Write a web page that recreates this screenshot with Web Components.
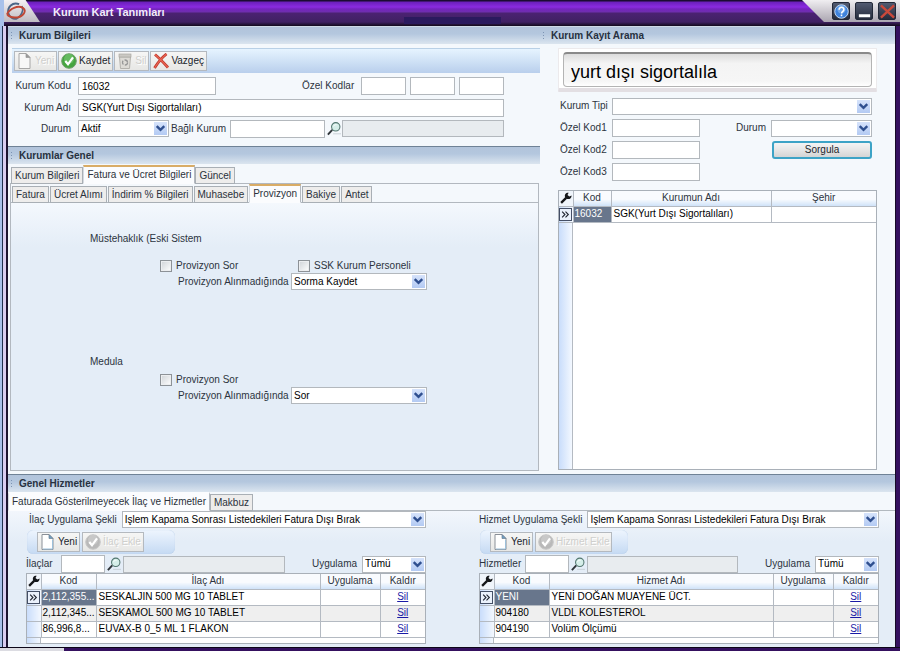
<!DOCTYPE html>
<html lang="tr">
<head>
<meta charset="utf-8">
<meta name="viewport" content="width=device-width, initial-scale=1">
<title>Kurum Kart Tanımları</title>
<style>
  body { margin: 0; font: 10px/12px "Liberation Sans", Arial, sans-serif; color: #2c3440; }
</style>
</head>
<body>
<kk-app></kk-app>
<script>
const BASE = `
  *, *::before, *::after { box-sizing: border-box; }
  :host([hidden]) { display: none; }
  input, select, button { font: inherit; color: #000; margin: 0; border-radius: 0; }
`;

class Base extends HTMLElement {
  connectedCallback() {
    if (this.shadowRoot) return;
    const root = this.attachShadow({ mode: 'open' });
    root.innerHTML = `<style>${BASE}${this.css()}</style>${this.html()}`;
  }
  a(name, fallback = '') { return this.getAttribute(name) ?? fallback; }
  css() { return ''; }
  html() { return '<slot></slot>'; }
}

const ICONS = {
  page: `<path d="M2 .5h7l4 4v11H2z" fill="#fff" stroke="#8a9098"/><path d="M9 .5l4 4H9z" fill="#6c9fc4" stroke="#6d7f90" stroke-width=".7"/><path d="M3 15h9.500V6" fill="none" stroke="#9cc0da"/>`,
  pageoff: `<path d="M2 .5h7l4 4v11H2z" fill="#f7f7f7" stroke="#a6a6a6"/><path d="M9 .5l4 4H9z" fill="#999" stroke="#999" stroke-width=".7"/>`,
  check: `<circle cx="8" cy="8" r="7.300" fill="#45a53f" stroke="#6f9f6b"/><circle cx="8" cy="6" r="5" fill="#7cc974" opacity=".6"/><path d="M4.300 8l2.700 3.300 5-7" fill="none" stroke="#fff" stroke-width="2.200"/>`,
  checkoff: `<circle cx="8" cy="8" r="7.300" fill="#b9b9b9" stroke="#c8c8c8"/><circle cx="8" cy="6" r="5" fill="#d2d2d2" opacity=".6"/><path d="M4.300 8l2.700 3.300 5-7" fill="none" stroke="#fff" stroke-width="2.200"/>`,
  bin: `<path d="M2.500 4h11L12.500 15.500h-9z" fill="#dddbd6" stroke="#b3b1ac"/><rect x="2" y="1" width="12" height="3" fill="#cbc9c4" stroke="#aaa8a3" stroke-width=".7"/><circle cx="8" cy="9.500" r="2.500" fill="none" stroke="#969696" stroke-width="1.300" stroke-dasharray="4 1.500"/>`,
  cross: `<path d="M2 1.500C5 4 10 9 15 14.500M13.500 1C9 4.500 5 9.500 1.500 15" fill="none" stroke="#bd3528" stroke-width="2.800"/><path d="M2 1.500C5 4 10 9 15 14.500M13.500 1C9 4.500 5 9.500 1.500 15" fill="none" stroke="#ea6553" stroke-width="1.200"/>`,
  lens: `<path d="M1 14.500l5-5.500" stroke="#30353a" stroke-width="2.200"/><circle cx="10" cy="5.500" r="4.800" fill="#d5eee9" stroke="#52766f" stroke-width="1.200"/><path d="M7.500 5c.5-1.500 2-2.200 3.500-1.800" fill="none" stroke="#fff"/><path d="M7 13.500h9" stroke="#c5cdd2"/>`,
  wrench: `<path d="M1.500 14.500l7-7" stroke="#15171a" stroke-width="3"/><path d="M15.500 4.500l-3 1.500L10 4l1.500-3C8 .5 5.500 3.500 6.800 6.500l2.700 2.700c3 1 6-1 6-4.700z" fill="#15171a"/>`,
  help: `<circle cx="8" cy="8" r="7.200" fill="#3f83dc" stroke="#cfe3fa"/><circle cx="8" cy="5.500" r="4.500" fill="#8fbcf0" opacity=".6"/><path d="M5.500 6c0-3.500 5.200-3.300 5 0 0 1.800-2.400 1.800-2.400 4M8 11.300v1.700" fill="none" stroke="#fff" stroke-width="1.700"/>`,
  min: `<path d="M2 11h12v3H2z" fill="#fff"/>`,
  close: `<path d="M1 1.500l14 13M15 1.500l-14 13" stroke="#c9493b" stroke-width="2.600"/>`,
  chevron: `<path d="M2.500 4.500L8 10l5.500-5.500" fill="none" stroke="#2f4f8f" stroke-width="3.500"/>`,
  arrows: `<path d="M2 3l5 5-5 5M8 3l5 5-5 5" fill="none" stroke="#1f2430" stroke-width="2"/>`,
  logo: `<path d="M10.500 2.500C5 .5 1 5 1.800 9.500c.7 3.500 4 5.500 7 4.500" fill="none" stroke="#4b6687" stroke-width="1.500"/><path d="M8.800 14c3.500-2 5.500-6 4-10" fill="none" stroke="#4b6687" stroke-width="1.300"/><path d="M.8 10.500C3 6 9.500 3.200 13.500 5.500c3.500 2.500 0 6.800-4 7.500C6 13.500 2.500 12.800.8 10.500" fill="none" stroke="#c04735" stroke-width="1.500"/>`
};

customElements.define('kk-icon', class extends Base {
  css() { return `:host{display:block;flex:none;width:16px;height:16px} svg{display:block;width:100%;height:100%}`; }
  html() { return `<svg viewBox="0 0 16 16" aria-hidden="true">${ICONS[this.a('name')]}</svg>`; }
});

customElements.define('kk-button', class extends Base {
  css() { return `
    :host{display:block;flex:none}
    button{display:flex;align-items:center;gap:2px;height:20px;width:100%;padding:0 2px;border:1px solid #b4b9bf;
      background:linear-gradient(#f6f6f5,#e7e7e5);color:#20252c;white-space:nowrap}
    button:disabled{color:#cfcfcd;text-shadow:1px 1px #fff}
    button.plain{justify-content:center;height:18px;border:2px solid #3da3c6;border-radius:3px;padding:0;
      background:linear-gradient(#f4f4f4,#e6e6e6 50%,#d4d4d4)}`; }
  html() {
    const icon = this.a('icon');
    return `<button type="button" class="${icon ? '' : 'plain'}" ${this.hasAttribute('disabled') ? 'disabled' : ''}>
      ${icon ? `<kk-icon name="${icon}"></kk-icon>` : ''}<span><slot></slot></span></button>`;
  }
});

customElements.define('kk-input', class extends Base {
  css() { return `
    :host{display:flex;align-items:center;gap:7px;min-width:0}
    label{flex:none;width:var(--label,auto);text-align:var(--align,left);white-space:nowrap}
    input{flex:1;min-width:0;width:0;height:18px;border:1px solid #b3b8bd;background:#fff;padding:0 3px;outline:0}
    input:disabled{background:#e8ecef;height:17px}`; }
  html() {
    const label = this.a('label');
    return `${label ? `<label for="f">${label}</label>` : ''}<input id="f" type="text" value="${this.a('value')}"
      ${label ? '' : `aria-label="${this.a('hint')}"`} ${this.hasAttribute('disabled') ? 'disabled' : ''}>`;
  }
});

customElements.define('kk-select', class extends Base {
  css() { return `
    :host{display:flex;align-items:center;gap:7px;min-width:0}
    label{flex:none;width:var(--label,auto);text-align:var(--align,left);white-space:nowrap}
    .box{position:relative;flex:1;min-width:0}
    select{display:block;appearance:none;width:100%;height:17px;border:1px solid #b3b8bd;background:#fff;padding:0 18px 0 2px;outline:0}
    .drop{position:absolute;right:2px;top:2px;bottom:2px;width:13px;display:grid;place-items:center;
      background:linear-gradient(#d6e3fb,#b3caf3);pointer-events:none}
    kk-icon{width:11px;height:11px}`; }
  html() {
    return `<label for="f">${this.a('label')}</label><div class="box"><select id="f"><option>${this.a('value')}</option></select>
      <span class="drop"><kk-icon name="chevron"></kk-icon></span></div>`;
  }
});

customElements.define('kk-check', class extends Base {
  css() { return `
    :host{display:block} label{display:flex;align-items:center;gap:4px;white-space:nowrap}
    input{appearance:none;width:12px;height:12px;border:1px solid #8d9297;background:linear-gradient(135deg,#cfd3d7,#fff);
      box-shadow:inset 0 0 0 1px #eceef0}
    input:checked{background:#3a5f9c}`; }
  html() { return `<label><input type="checkbox"><slot></slot></label>`; }
});

customElements.define('kk-section', class extends Base {
  css() { return `
    :host{display:flex;flex-direction:column;min-width:0}
    h2{flex:none;display:flex;align-items:center;gap:5px;margin:0;height:18px;padding:0 2px;font:bold 10px/16px "Liberation Sans",Arial,sans-serif;
      color:#27313f;border-top:1px solid var(--edge,#cfdae6);background:linear-gradient(#b2c4db,#b4c7de 40%,#dbe5ef)}
    h2::before{content:"";width:4px;height:9px;background:radial-gradient(circle,#7d94b3 40%,transparent 45%) 0 0/3px 3px}
    .body{flex:1;display:flex;flex-direction:column;min-height:0}`; }
  html() { return `<h2>${this.a('heading')}</h2><div class="body"><slot></slot></div>`; }
});

customElements.define('kk-tabs', class extends Base {
  css() { return `
    :host{display:flex;flex-direction:column;flex:1;min-height:0}
    .bar{display:flex;align-items:flex-end;gap:var(--gap,0);height:19px;padding-left:var(--indent,0);
      box-shadow:inset 0 -1px #b2b8bf}
    button{flex:none;height:17px;padding:0 3px;border:1px solid #a9afb5;background:#eeedec;color:#2b323b;white-space:nowrap;line-height:15px}
    button[aria-selected=true]{height:19px;border-color:transparent #b4b9c0 transparent #d5dae0;border-top:2px solid var(--accent,#d9ac66);background:#fbfcfe;padding-bottom:2px}
    .body{flex:1;display:flex;flex-direction:column;border:solid #b2b8bf;border-width:var(--frame,0)}`; }
  html() {
    const active = this.a('active');
    return `<div class="bar" role="tablist">${this.a('tabs').split('|').map(t =>
      `<button type="button" role="tab" aria-selected="${t === active}">${t}</button>`).join('')}</div>
      <div class="body" role="tabpanel"><slot></slot></div>`;
  }
});

customElements.define('kk-grid', class extends Base {
  css() { return `
    :host{display:block;border:1px solid #a9b0b8;background:linear-gradient(90deg,#c9ddfb,#f3f8ff 13px,#b4bac2 13px,#b4bac2 14px,#fff 14px)}
    table{width:100%;border-collapse:collapse;table-layout:fixed}
    th,td{height:16px;padding:0 2px;border:1px solid #b4bac2;white-space:nowrap;line-height:12px}
    tr>:first-child{border-left:0;padding:0;width:14px} tr>:last-child{border-right:0}
    th{font-weight:normal;border-top:0;height:15px;background:linear-gradient(#f9fbfe 55%,#cfe2f8)}
    th:first-child{background:#f0f5fb}
    td{background:#fff;color:#000}
    td:nth-child(2){padding:0 0 0 1px}
    td:first-child{background:linear-gradient(90deg,#c9ddfb,#f3f8ff)}
    tr:nth-child(even) td:not(:first-child){background:#efefef}
    tr.on td:nth-child(2){background:#68768c;color:#fff}
    .mark{display:grid;place-items:center;width:13px;height:13px;border:1px solid #444f66;background:#eaf1fc}
    .mark kk-icon{width:9px;height:9px}
    th kk-icon{width:12px;height:12px;margin:0 auto}
    .mid{text-align:center} a{color:#1a1aa6}`; }
  html() {
    const cols = this.a('cols').split('|').map(c => c.split(':'));
    const rows = this.a('rows').split(';').map(r => r.split('|'));
    const cell = (v) => v === 'Sil' ? `<td class="mid"><a href="#">Sil</a></td>` : `<td>${v}</td>`;
    return `<table><colgroup><col style="width:14px">${cols.map(c => `<col${c[1] ? ` style="width:${c[1]}px"` : ''}>`).join('')}</colgroup>
      <thead><tr><th aria-label="Ayarlar"><kk-icon name="wrench"></kk-icon></th>${cols.map(c => `<th scope="col">${c[0]}</th>`).join('')}</tr></thead>
      <tbody>${rows.map((r, i) => `<tr class="${i ? '' : 'on'}"><td>${i ? '' : '<span class="mark"><kk-icon name="arrows"></kk-icon></span>'}</td>${r.map(cell).join('')}</tr>`).join('')}</tbody></table>`;
  }
});

customElements.define('kk-titlebar', class extends Base {
  css() { return `
    :host{display:flex;justify-content:space-between;height:26px;color:#fff;border-left:4px solid #a8c1ea;
      background:linear-gradient(#2b1a5e,#2b1a5e) 50% 17px/97px 7px no-repeat,
        linear-gradient(#1c0b33 0 1px,#6b1fbb 2px,#8a2be0 7px,#7424bd 9px,#6f2fae 12px,#4b2272 13px,#402163 22px,#120a1c 26px)}
    .brand{display:flex;gap:13px}
    .logo{width:36px;height:22px;padding:1px 2px;background:linear-gradient(#f3f0f3,#bfbbc2);clip-path:polygon(0 0,60% 0,100% 100%,0 100%)}
    .logo kk-icon{width:20px;height:20px}
    h1{margin:0;font:bold 11px/25px "Liberation Sans",Arial,sans-serif;color:#f2ecfa}
    .tools{display:flex;gap:5px;height:22px;padding:2px 4px 2px 30px;background:linear-gradient(#f0eef1,#aaa5b0);clip-path:polygon(0 0,100% 0,100% 100%,22px 100%)}
    button{display:grid;place-items:center;width:18px;height:18px;padding:0;border:1px solid #222838;border-radius:2px;background:linear-gradient(#525a70,#262c3c)}
    button kk-icon{width:15px;height:15px}`; }
  html() { return `<div class="brand"><span class="logo"><kk-icon name="logo"></kk-icon></span><h1><slot></slot></h1></div>
    <div class="tools"><button type="button" aria-label="Yardım"><kk-icon name="help"></kk-icon></button>
    <button type="button" aria-label="Küçült"><kk-icon name="min"></kk-icon></button>
    <button type="button" aria-label="Kapat"><kk-icon name="close"></kk-icon></button></div>`; }
});

customElements.define('kk-institution', class extends Base {
  css() { return `
    :host{display:flex;flex-direction:column;gap:4px;padding:4px 0 9px 4px;--label:59px;--align:right}
    .bar{display:flex;gap:1px;height:25px;padding:2px;border-top:1px solid #b9d0e6;background:linear-gradient(#e6f4ff,#b9cfec)}
    .row{display:flex;align-items:center;margin-right:36px;height:17px}
    .row.first{height:18px;justify-content:space-between;gap:6px}
    .code{flex:0 1 204px} .codes{display:flex;gap:4px}
    .codes kk-input{width:45px;--label:auto} .codes kk-input:first-child{width:104px}
    .name{flex:1} .state{width:157px;flex:none} .parent{width:155px;flex:none;--label:56px;gap:4px;margin-left:1px}
    .find{flex:1;height:17px} .row kk-icon{margin:0 1px 0 2px;width:14px}`; }
  html() { return `
    <div class="bar"><kk-button icon="pageoff" disabled>Yeni</kk-button><kk-button icon="check">Kaydet</kk-button>
      <kk-button icon="bin" disabled>Sil</kk-button><kk-button icon="cross">Vazgeç</kk-button></div>
    <div class="row first"><kk-input class="code" label="Kurum Kodu" value="16032"></kk-input>
      <div class="codes"><kk-input label="Özel Kodlar"></kk-input><kk-input hint="Özel Kod 2"></kk-input><kk-input hint="Özel Kod 3"></kk-input></div></div>
    <div class="row"><kk-input class="name" label="Kurum Adı" value="SGK(Yurt Dışı Sigortalıları)"></kk-input></div>
    <div class="row"><kk-select class="state" label="Durum" value="Aktif"></kk-select>
      <kk-input class="parent" label="Bağlı Kurum"></kk-input><kk-icon name="lens"></kk-icon>
      <kk-input class="find" hint="Bağlı kurum adı" disabled></kk-input></div>`; }
});

customElements.define('kk-provision', class extends Base {
  css() { return `
    :host{display:block;flex:1;padding:30px 0 0 79px;background:linear-gradient(#f4f8fd,#e4edf7 44px)}
    h3{margin:0;font:inherit;line-height:12px}
    .opts{display:grid;grid-template-columns:138px auto;justify-content:start;padding:15px 0 0 70px;line-height:12px}
    kk-select{width:249px;margin:1px 0 0 88px;--label:106px;--align:left}
    section+section{padding-top:66px}
    section+section .opts{padding-top:6px}`; }
  html() { return `
    <section><h3>Müstehaklık (Eski Sistem</h3>
      <div class="opts"><kk-check>Provizyon Sor</kk-check><kk-check>SSK Kurum Personeli</kk-check></div>
      <kk-select label="Provizyon Alınmadığında" value="Sorma Kaydet"></kk-select></section>
    <section><h3>Medula</h3>
      <div class="opts"><kk-check>Provizyon Sor</kk-check></div>
      <kk-select label="Provizyon Alınmadığında" value="Sor"></kk-select></section>`; }
});

customElements.define('kk-search', class extends Base {
  css() { return `
    :host{display:flex;flex-direction:column;flex:1;padding:4px 18px 4px 18px;--label:45px}
    .query{padding:3px 4px 1px;background:#fff;border:1px solid #eceaec;border-bottom:4px solid #e3dfe3;border-radius:1px;margin-bottom:5px}
    .query input{display:block;width:100%;height:35px;padding:4px 7px 0;font-size:18px;border:1px solid #b4b4b4;border-top:2px solid #8a8a8a;border-radius:4px;
      background:linear-gradient(#dcdcdc,#f4f4f4 30%,#f6f6f6 85%,#fff);outline:0}
    form{display:grid;grid-template-columns:140px 1fr 136px;grid-auto-rows:18px;row-gap:4px;margin:0 5px 9px 2px;align-items:center}
    .wide{grid-column:1/-1} .state{grid-column:3;--label:28px} kk-button{grid-column:3;margin-left:36px}
    kk-grid{flex:1}`; }
  html() { return `
    <div class="query"><input type="text" aria-label="Kurum ara" value="yurt dışı sigortalıla"></div>
    <form><kk-select class="wide" label="Kurum Tipi" value=""></kk-select>
      <kk-input label="Özel Kod1"></kk-input><kk-select class="state" label="Durum" value=""></kk-select>
      <kk-input label="Özel Kod2"></kk-input><kk-button>Sorgula</kk-button>
      <kk-input label="Özel Kod3"></kk-input></form>
    <kk-grid cols="Kod:38|Kurumun Adı|Şehir:105" rows="16032|SGK(Yurt Dışı Sigortalıları)|"></kk-grid>`; }
});

customElements.define('kk-services', class extends Base {
  css() { return `
    :host{display:flex;flex-direction:column;min-width:0}
    .mode{margin-left:var(--start,3px);gap:5px}
    .bar{display:flex;gap:2px;align-self:flex-start;width:148px;height:24px;margin:2px 0 1px 1px;padding:2px 10px;border-radius:6px;
      background:linear-gradient(#eef5fe,#c5daf3);box-shadow:inset 0 0 1px #a9c2e0}
    .row{display:flex;align-items:center;height:18px}
    .pick{width:var(--pick,79px);gap:0;flex:none;--label:var(--pick-label,35px)} .name{flex:1;margin-right:27px}
    .row kk-icon{width:14px;margin:0 2px;height:15px}
    .apply{width:114px;flex:none;--label:43px}
    kk-grid{height:71px}`; }
  html() {
    const k = this.a('kind');
    return `<kk-select class="mode" label="${k} Uygulama Şekli" value="İşlem Kapama Sonrası Listedekileri Fatura Dışı Bırak"></kk-select>
      <div class="bar"><kk-button icon="page">Yeni</kk-button><kk-button icon="checkoff" disabled>${k} Ekle</kk-button></div>
      <div class="row"><kk-input class="pick" label="${this.a('plural')}"></kk-input><kk-icon name="lens"></kk-icon>
        <kk-input class="name" hint="${k} adı" disabled></kk-input><kk-select class="apply" label="Uygulama" value="Tümü"></kk-select></div>
      <kk-grid cols="Kod:55|${k} Adı|Uygulama:60|Kaldır:45" rows="${this.a('rows')}"></kk-grid>`;
  }
});

customElements.define('kk-app', class extends Base {
  css() { return `
    :host{display:flex;flex-direction:column;min-height:100vh;background:#35115f}
    .frame{flex:1;display:flex;flex-direction:column;border-right:1px solid #160a26;margin-right:4px;
      padding-left:8px;background:linear-gradient(90deg,#a8c1ea 0 2px,#20304e 2px 3px,#d9cdf0 3px 6px,#1c1430 6px 8px,#f4f8fc 8px)}
    .top{flex:1;display:grid;grid-template-columns:minmax(0,532fr) minmax(0,355fr)}
    .left{display:flex;flex-direction:column}
    .general{flex:1;--edge:#6f8296}
    .outer{margin:1px 1px 3px 2px;--frame:0 1px 1px 1px;--indent:1px}
    .inner{--frame:0;--indent:1px;--gap:1px}
    .bottom{--edge:#6f8296;--accent:#fbfcfe}
    .pair{display:grid;grid-template-columns:1fr 1fr;gap:53px;padding:0 16px 3px 18px;background:linear-gradient(#f2f6fc,#e4edf7 30px)}
    .foot{height:4px;border-top:1px solid #0c0618;background:linear-gradient(90deg,#dcdce2 64px,#35115f 64px)}`; }
  html() { return `
    <kk-titlebar>Kurum Kart Tanımları</kk-titlebar>
    <div class="frame">
      <div class="top">
        <div class="left">
          <kk-section heading="Kurum Bilgileri"><kk-institution></kk-institution></kk-section>
          <kk-section class="general" heading="Kurumlar Genel">
            <kk-tabs class="outer" tabs="Kurum Bilgileri|Fatura ve Ücret Bilgileri|Güncel" active="Fatura ve Ücret Bilgileri">
              <kk-tabs class="inner" tabs="Fatura|Ücret Alımı|İndirim % Bilgileri|Muhasebe|Provizyon|Bakiye|Antet" active="Provizyon">
                <kk-provision></kk-provision>
              </kk-tabs>
            </kk-tabs>
          </kk-section>
        </div>
        <kk-section heading="Kurum Kayıt Arama"><kk-search></kk-search></kk-section>
      </div>
      <kk-section class="bottom" heading="Genel Hizmetler">
        <kk-tabs tabs="Faturada Gösterilmeyecek İlaç ve Hizmetler|Makbuz" active="Faturada Gösterilmeyecek İlaç ve Hizmetler">
          <div class="pair">
            <kk-services kind="İlaç" plural="İlaçlar" rows="2,112,355...|SESKALJIN 500 MG 10 TABLET||Sil;2,112,345...|SESKAMOL 500 MG 10 TABLET||Sil;86,996,8...|EUVAX-B 0_5 ML 1 FLAKON||Sil"></kk-services>
            <kk-services kind="Hizmet" plural="Hizmetler" style="--start:0px;--pick:90px;--pick-label:46px" rows="YENI|YENİ DOĞAN MUAYENE ÜCT.||Sil;904180|VLDL KOLESTEROL||Sil;904190|Volüm Ölçümü||Sil"></kk-services>
          </div>
        </kk-tabs>
      </kk-section>
    </div>
    <div class="foot"></div>`; }
});
</script>
</body>
</html>
